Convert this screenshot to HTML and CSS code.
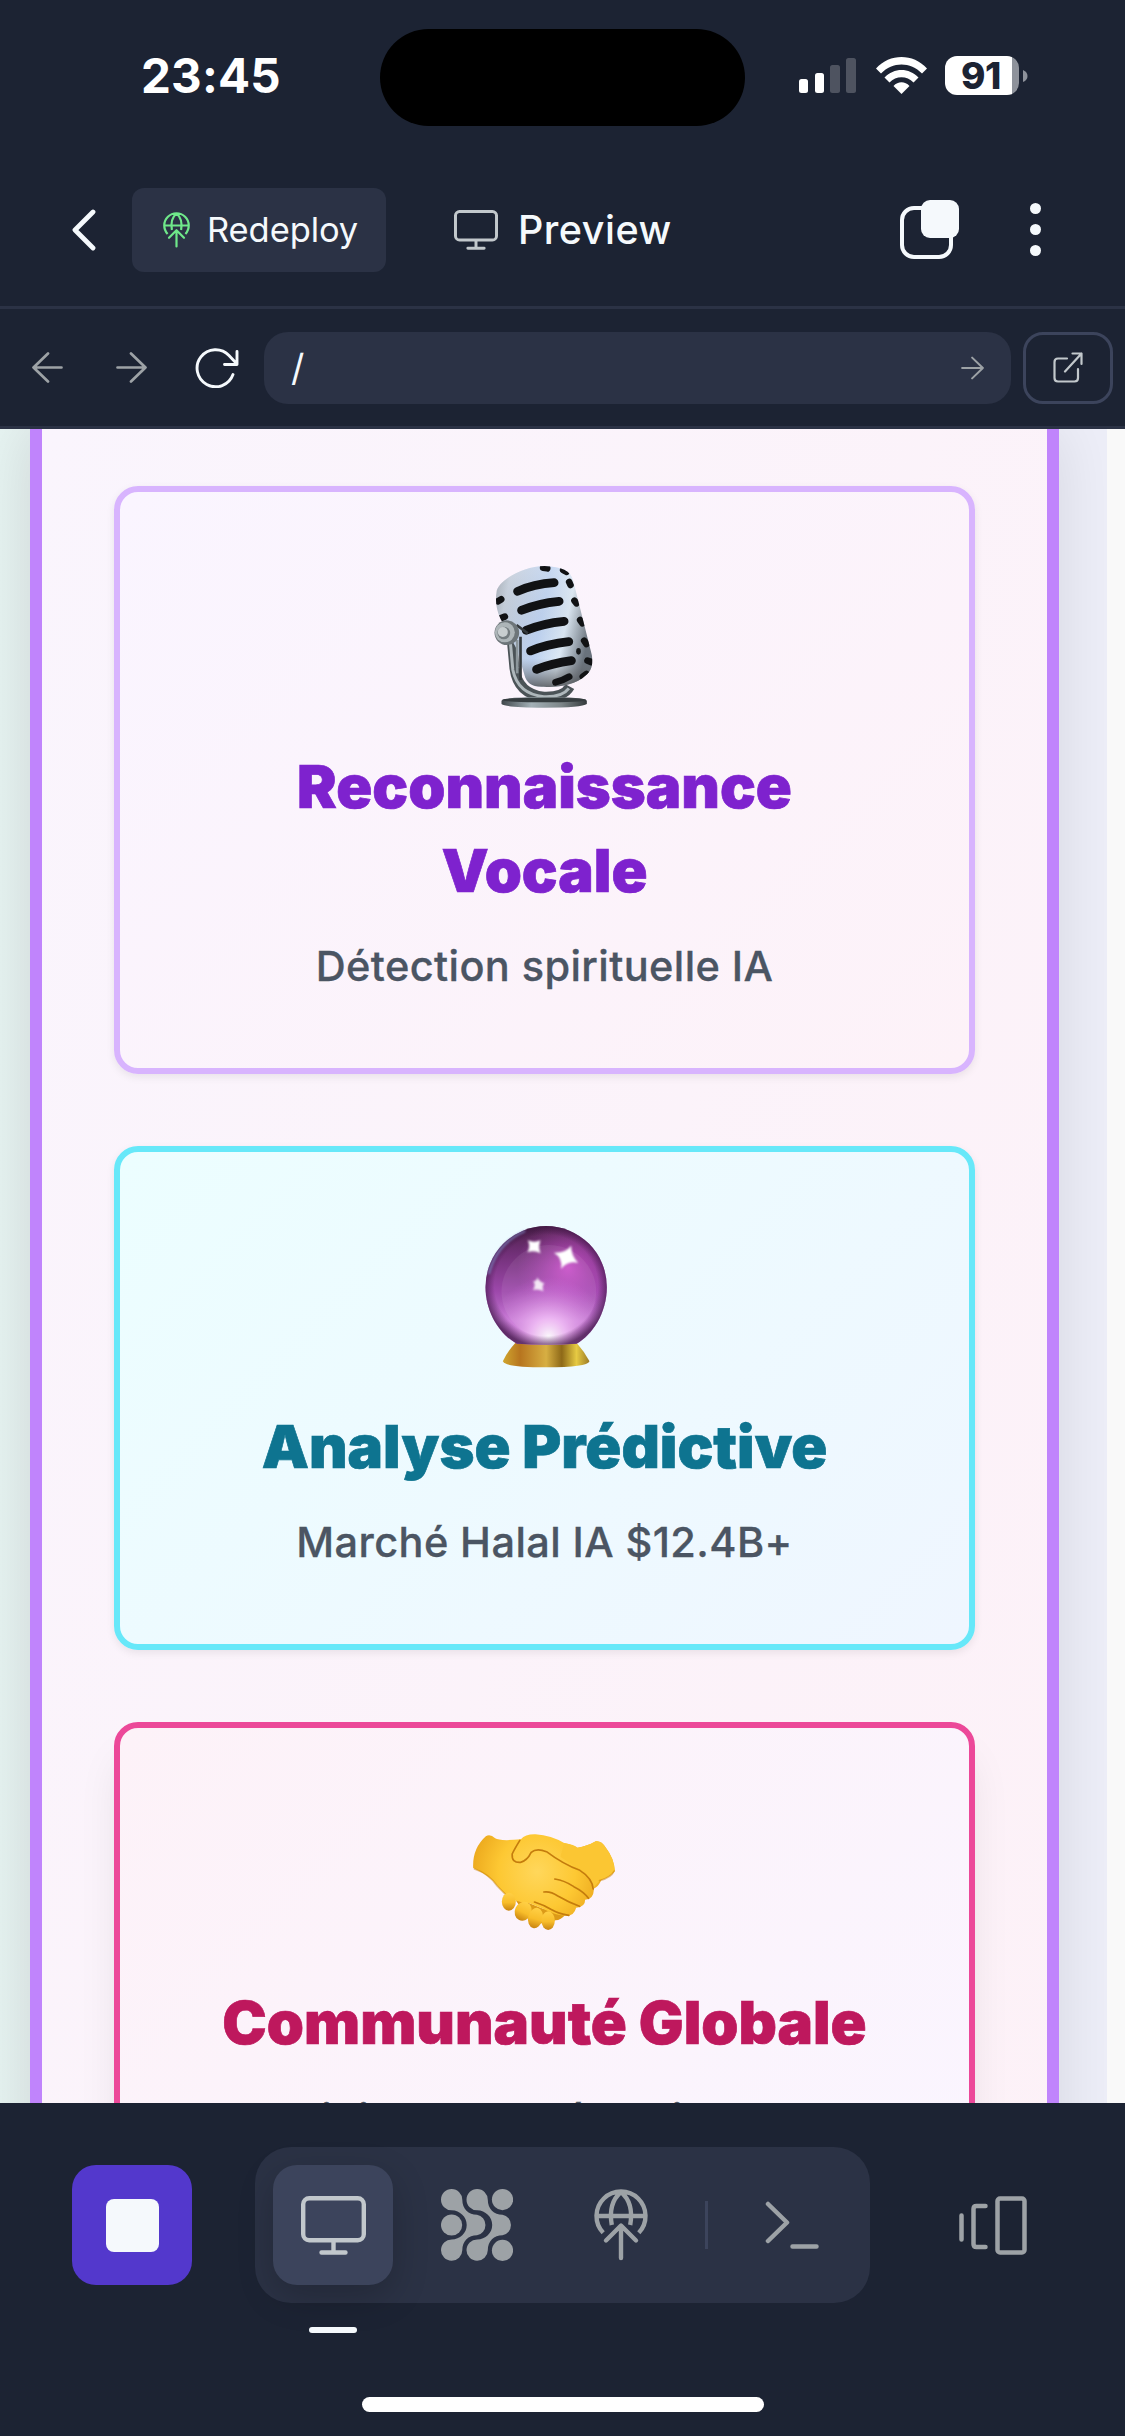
FILE: index.html
```
<!DOCTYPE html>
<html lang="fr">
<head>
<meta charset="utf-8">
<title>Preview</title>
<link rel="stylesheet" href="styles.css">
</head>
<body>
<svg class="defs" aria-hidden="true">
  <symbol id="monitor" viewBox="0 0 65 59"><g fill="none" stroke="currentColor" stroke-width="4.4" stroke-linecap="round"><rect x="2.2" y="2.2" width="60.6" height="42" rx="6"/><path d="M32.5 45v11M20.5 56.5h24"/></g></symbol>
  <symbol id="deploy" viewBox="0 0 54 72"><g fill="none" stroke="currentColor" stroke-width="4.4" stroke-linecap="round" stroke-linejoin="round"><path stroke-linecap="butt" d="M9.2 43.8A24.5 24.5 0 1 1 44.8 43.8M3 27h48M17.8 36C15.500 23 17.500 11 27 3C36.500 11 38.500 23 36.200 36"/><path d="M27 69V37M12 51.500L27 36.500L42 51.500"/></g></symbol>
  <symbol id="arrow" viewBox="0 0 31 31"><path fill="none" stroke="currentColor" stroke-width="2.700" stroke-linecap="round" stroke-linejoin="round" d="M1.500 15.500H29.500M15 1.500L29.500 15.500L15 29.500"/></symbol>
</svg>

<header class="status">
  <div class="time">23:45</div>
  <div class="island"></div>
  <div class="indicators">
    <svg width="57" height="36" viewBox="0 0 57 36"><g fill="#fff"><rect y="22" width="9" height="14" rx="2.500"/><rect x="16" y="16" width="9" height="20" rx="2.500"/><g opacity=".22"><rect x="31" y="8" width="10" height="28" rx="2.500"/><rect x="47" y="1" width="10" height="35" rx="2.500"/></g></g></svg>
    <svg class="wifi" width="51" height="37" viewBox="0 0 51 37"><path fill="#fff" d="M0 11.500C14-3.800 37-3.800 51 11.500L46 16.500C34.500 4.500 16.500 4.500 5 16.500ZM8.500 20.500C18 10.500 33 10.500 42.500 20.500L37.500 25.500C31 18.500 20 18.500 13.500 25.500ZM17.500 29C22 24 29 24 33.500 29L25.500 37Z"/></svg>
    <div class="battery"><span>91</span></div>
    <svg class="nub" width="5" height="12" viewBox="0 0 5 12"><path fill="#8e929b" d="M0 0Q4.500 2 4.500 6T0 12Z"/></svg>
  </div>
</header>

<nav class="titlebar">
  <svg class="back" width="24" height="42" viewBox="0 0 24 42"><path fill="none" stroke="#f5f9fc" stroke-width="4.800" stroke-linecap="round" stroke-linejoin="round" d="M21 3L3 21L21 39"/></svg>
  <div class="redeploy"><svg width="27" height="36"><use href="#deploy"/></svg><span>Redeploy</span></div>
  <div class="tab"><svg width="44" height="40"><use href="#monitor"/></svg><span>Preview</span></div>
  <svg class="tabs" width="59" height="59" viewBox="0 0 59 59"><rect x="2" y="8" width="49" height="49" rx="12" fill="none" stroke="#f5f9fc" stroke-width="4"/><rect x="21" width="38" height="38" rx="9" fill="#f5f9fc"/></svg>
  <svg class="dots" width="11" height="53" viewBox="0 0 11 53" fill="#f5f9fc"><circle cx="5.500" cy="5.500" r="5.500"/><circle cx="5.500" cy="26.500" r="5.500"/><circle cx="5.500" cy="47.500" r="5.500"/></svg>
</nav>

<div class="urlbar">
  <svg class="nav-prev" width="31" height="31"><use href="#arrow"/></svg>
  <svg class="nav-next" width="31" height="31"><use href="#arrow"/></svg>
  <svg class="reload" width="44" height="40" viewBox="0 0 44 40"><path fill="none" stroke="#f5f9fc" stroke-width="2.900" stroke-linecap="round" stroke-linejoin="round" d="M38 26.500A18.500 18.500 0 1 1 34 7.500L42 16M42 3.500V16.500H29.500"/></svg>
  <div class="address"><span>/</span><svg width="23" height="24"><use href="#arrow"/></svg></div>
  <div class="external"><svg width="30" height="31" viewBox="0 0 30 31"><path fill="none" stroke="#c2c8cc" stroke-width="2.200" stroke-linecap="round" stroke-linejoin="round" d="M14 6.500H5Q1.500 6.500 1.500 10V26Q1.500 29.500 5 29.500H21.500Q25 29.500 25 26V17M12 19.500L28.500 1.500M19.500 1.500H28.500V12"/></svg></div>
</div>

<main class="page">
  <section class="panel">
    <article class="card purple">
      <svg class="emoji" viewBox="97.500 72 432 432">
        <defs>
          <linearGradient id="steel" x1="0" y1="0" x2="1" y2=".25"><stop offset="0" stop-color="#8b929a"/><stop offset=".2" stop-color="#c3cddb"/><stop offset=".55" stop-color="#bdd2f1"/><stop offset=".78" stop-color="#dce9f5"/><stop offset="1" stop-color="#69727c"/></linearGradient>
          <linearGradient id="rim" x1="0" y1="0" x2="0" y2="1"><stop offset="0" stop-color="#fff" stop-opacity=".2"/><stop offset=".75" stop-color="#777" stop-opacity="0"/><stop offset="1" stop-color="#474a4d" stop-opacity=".9"/></linearGradient>
          <linearGradient id="base" x1="0" y1="0" x2="1" y2="0"><stop offset="0" stop-color="#3f474b"/><stop offset=".35" stop-color="#a3b0b6"/><stop offset=".7" stop-color="#7d8689"/><stop offset="1" stop-color="#343a3c"/></linearGradient>
          <clipPath id="micbody"><path d="M168 158C168 125 245 78 312 78C362 80 392 92 398 122L454 345C459 374 452 393 436 406C405 436 350 443 310 440C276 442 258 430 252 405L230 330L180 236C167 210 164 180 168 158Z"/></clipPath>
        </defs>
        <path d="M214 300L222 385Q232 462 310 470Q370 472 388 440" fill="none" stroke="#4b5357" stroke-width="30"/>
        <path d="M209 300L217 390Q232 462 310 470Q365 472 385 445" fill="none" stroke="#aeb7bb" stroke-width="9"/>
        <g clip-path="url(#micbody)">
          <rect x="150" y="70" width="320" height="380" fill="url(#steel)"/>
          <rect x="150" y="70" width="320" height="380" fill="url(#rim)"/>
          <g fill="none" stroke="#111214" stroke-width="26" stroke-linecap="round">
            <path d="M231 154Q280 132 341 128M243 211Q292 190 356 184M257 271Q307 250 371 244M270 333Q320 312 385 305M288 388Q335 370 393 362"/>
            <path stroke-width="20" d="M172 184L182 178M178 236L193 230M308 83L320 85M386 126L390 135M402 182L408 190M419 240L426 250M431 302L438 312M441 362L452 366M345 427Q368 421 386 410M427 410L438 402M368 90L378 95"/>
          </g>
          <ellipse cx="414" cy="334" rx="7" ry="10" fill="#151719"/>
        </g>
        <path d="M228 255L262 280M240 290V420" stroke="#34393c" stroke-width="8"/>
        <path d="M230 300V400" stroke="#8c969b" stroke-width="8"/>
        <circle cx="199" cy="278" r="37" fill="#6d7579"/><circle cx="193" cy="277" r="30" fill="#adb5b8"/><circle cx="190" cy="279" r="19" fill="#747c80"/><circle cx="187" cy="276" r="15" fill="#c8ced0"/>
        <path d="M183 482Q190 471 312 471T439 482V492Q425 503 311 503T183 492Z" fill="url(#base)"/><ellipse cx="311" cy="480" rx="126" ry="7" fill="#353c3f"/>
      </svg>
      <h2>Reconnaissance<br>Vocale</h2>
      <p>Détection spirituelle IA</p>
    </article>

    <article class="card cyan">
      <svg class="emoji" viewBox="97.500 72 432 432">
        <defs>
          <linearGradient id="orb" x1="0" y1="0" x2="0" y2="1"><stop offset="0" stop-color="#4c2148"/><stop offset=".22" stop-color="#6f2f75"/><stop offset=".55" stop-color="#9d48ab"/><stop offset=".8" stop-color="#bd75cc"/><stop offset="1" stop-color="#9545a2"/></linearGradient>
          <radialGradient id="glow" cx=".52" cy=".93" r=".5"><stop offset="0" stop-color="#fff" stop-opacity=".95"/><stop offset=".3" stop-color="#f4bdf9" stop-opacity=".85"/><stop offset="1" stop-color="#d567e2" stop-opacity="0"/></radialGradient>
          <radialGradient id="glint" cx=".68" cy=".35" r=".42"><stop offset="0" stop-color="#e75be3" stop-opacity=".7"/><stop offset="1" stop-color="#c752cf" stop-opacity="0"/></radialGradient>
          <radialGradient id="edge" cx=".5" cy=".5" r=".52"><stop offset=".82" stop-color="#37103e" stop-opacity="0"/><stop offset="1" stop-color="#37103e" stop-opacity=".7"/></radialGradient>
          <linearGradient id="gold" x1="0" y1="0" x2="1" y2="0"><stop offset="0" stop-color="#d0a62f"/><stop offset=".2" stop-color="#b7751f"/><stop offset=".5" stop-color="#d7af43"/><stop offset=".68" stop-color="#8e6918"/><stop offset=".85" stop-color="#e6ca43"/><stop offset="1" stop-color="#9c7b26"/></linearGradient>
          <filter id="soft" x="-.5" y="-.5" width="2" height="2"><feGaussianBlur stdDeviation="2.500"/></filter>
          <path id="ball" d="M317 78A182 183 0 0 1 499 261C499 340 455 405 408 431Q317 437 229 431C180 405 135 340 135 261A182 183 0 0 1 317 78Z"/>
        </defs>
        <path d="M225 428H408Q432 455 447 484Q440 502 317 502T187 484Q200 455 225 428Z" fill="url(#gold)"/>
        <use href="#ball" fill="url(#orb)"/>
        <use href="#ball" fill="url(#glint)"/>
        <use href="#ball" fill="url(#glow)"/>
        <ellipse cx="325" cy="275" rx="142" ry="140" fill="#fff" opacity=".07"/>
        <use href="#ball" fill="url(#edge)"/>
        <path d="M145 222Q168 130 254 93" fill="none" stroke="#8791cf" stroke-width="7" opacity=".65" filter="url(#soft)"/>
        <g fill="#fff" filter="url(#soft)"><path d="M262 121Q281 129 300 121Q292 140 300 160Q281 149 261 157Q271 139 262 121Z"/><path d="M340 158Q374 160 392 137Q391 164 413 189Q381 181 362 207Q367 173 340 158Z"/><path opacity=".85" d="M290 232Q296 246 312 250Q303 257 309 274Q294 266 277 270Q288 255 278 244Q290 244 290 232Z"/></g>
      </svg>
      <h2>Analyse Prédictive</h2>
      <p>Marché Halal IA $12.4B+</p>
    </article>

    <article class="card pink">
      <svg class="emoji" viewBox="97.500 0 432 432">
        <defs>
          <radialGradient id="skin" gradientUnits="userSpaceOnUse" cx="290" cy="215" r="210"><stop offset="0" stop-color="#ffd75b"/><stop offset=".55" stop-color="#fdc833"/><stop offset="1" stop-color="#eaa51b"/></radialGradient>
          <linearGradient id="finger" x1="0" y1="0" x2="0" y2="1"><stop offset="0" stop-color="#ffd046"/><stop offset=".55" stop-color="#f8bd2a"/><stop offset="1" stop-color="#c98411"/></linearGradient>
          <filter id="crease" x="-.2" y="-.2" width="1.400" height="1.400"><feGaussianBlur stdDeviation="2"/></filter>
        </defs>
        <path d="M345 150L411 143Q440 139 466 124Q482 121 496 143Q521 175 523 213Q515 228 482 241Q475 260 458 267L360 230Z" fill="#f2b326"/>
        <path d="M225 300L265 309L308 326L374 344Q362 360 345 361L320 372L270 365Z" fill="#dc9a18"/>
        <path d="M98 204Q95 146 136 109Q149 101 164 115Q178 124 241 118Q255 102 285 103Q333 107 371 129Q402 134 436 160Q445 185 430 217Q457 235 460 270Q459 298 434 299Q434 321 407 323Q400 350 373 347Q340 344 308 326L265 309Q229 310 196 284Q176 266 158 243Q137 222 98 204Z" fill="url(#skin)"/>
        <path d="M371 129Q402 134 411 143Q440 139 466 124Q482 121 496 143Q521 175 523 213Q500 232 480 240L456 266Q455 240 431 217Q390 190 360 170Z" fill="#fbc633"/>
        <g fill="none" stroke="#c47c0c" stroke-width="5" stroke-linecap="round" filter="url(#crease)"><path d="M238 121Q222 147 215 162Q213 189 240 187Q260 182 272 157Q288 143 318 155Q370 194 418 211Q456 235 458 267"/><path d="M343 237Q372 241 400 260Q430 275 444 295M310 276Q330 273 352 288Q385 307 417 319M282 306Q310 315 331 328Q355 342 385 346"/><path opacity=".45" d="M102 207Q145 221 170 258L195 283M477 242Q512 234 521 213" /></g>
        <g fill="url(#finger)"><ellipse cx="205" cy="305" rx="21" ry="27"/><ellipse cx="248" cy="334" rx="25" ry="29" transform="rotate(25 248 334)"/><ellipse cx="285" cy="354" rx="22" ry="31" transform="rotate(14 285 354)"/><ellipse cx="323" cy="362" rx="20" ry="28"/></g>
      </svg>
      <h2>Communauté Globale</h2>
      <p>Quotidien partagé en ligne halal</p>
    </article>
  </section>
  <div class="scroll"></div>
</main>

<footer class="dock">
  <div class="dock-row">
    <div class="stop"><i></i></div>
    <div class="pill">
      <div class="tool active"><svg width="65" height="59"><use href="#monitor"/></svg></div>
      <div class="tool"><svg width="72" height="72" viewBox="0 0 72 72" fill="currentColor"><path id="flow" d="M21.300 10.700C21.300 20 27.500 25.700 36 25.700A10.500 10.500 0 0 1 36 46.300C27.500 46.300 21.300 52 21.300 61.300A10.650 10.650 0 1 1 10.700 50.500C19 50.500 25.700 44 25.700 36S19 21.500 10.700 21.300A10.650 10.650 0 1 1 21.300 10.700Z"/><use href="#flow" x="25.500"/><circle cx="61.500" cy="10.600" r="10.600"/><circle cx="10.600" cy="36" r="10.600"/><circle cx="61.500" cy="61.400" r="10.600"/></svg></div>
      <div class="tool"><svg width="54" height="72"><use href="#deploy"/></svg></div>
      <div class="rule"></div>
      <div class="tool"><svg width="54" height="48" viewBox="0 0 54 48"><path fill="none" stroke="currentColor" stroke-width="4.500" stroke-linecap="round" stroke-linejoin="round" d="M3 3L22 21.500L3 40M27.500 45.500H51.500"/></svg></div>
    </div>
    <div class="tool"><svg width="68" height="59" viewBox="0 0 68 59"><g fill="none" stroke="currentColor" stroke-width="4.500" stroke-linecap="round" stroke-linejoin="round"><path d="M2.500 19.500V43.500M26.500 10H17.500Q14.500 10 14.500 13V48Q14.500 51 17.500 51H26.500"/><rect x="38.500" y="2.500" width="27" height="54" rx="2.500"/></g></svg></div>
  </div>
  <div class="current"></div>
  <div class="home"></div>
</footer>
</body>
</html>
```
FILE: styles.css
```
* { box-sizing: border-box; }
body { margin: 0; width: 1125px; height: 2436px; overflow: hidden; display: flex; flex-direction: column; background: #1c2333; color: #f5f9fc; font-family: Inter, "Liberation Sans", sans-serif; }
svg { display: block; flex: none; }
.defs { width: 0; height: 0; position: absolute; }

.status { height: 152px; flex: none; display: flex; align-items: flex-start; }
.time { width: 380px; padding-left: 141px; padding-top: 46px; font-size: 47.5px; line-height: 60px; font-weight: 700; color: #fff; letter-spacing: .2px; }
.island { width: 365px; height: 97px; margin-top: 29px; border-radius: 49px; background: #000; }
.indicators { display: flex; padding-top: 57px; margin-left: 54px; }
.wifi { margin-left: 20px; }
.battery { width: 74px; height: 39px; margin: -1px 0 0 18px; border-radius: 12px; background: linear-gradient(90deg, #fff 67px, #8e929b 67px); display: flex; align-items: center; justify-content: center; padding-right: 2px; color: #1c2333; font-size: 37px; line-height: 39px; font-weight: 800; letter-spacing: -.5px; }
.nub { margin: 13px 0 0 4px; }

.titlebar { height: 157px; flex: none; padding: 1px 84.5px 0 72px; border-bottom: 3px solid #2b3245; display: flex; align-items: center; }
.redeploy { width: 254px; height: 84px; margin-left: 36px; border-radius: 12px; background: #2b3245; display: flex; align-items: center; padding-left: 31px; gap: 17px; font-size: 34.5px; letter-spacing: -.1px; }
.redeploy svg { color: #6fe88a; }
.tab { display: flex; align-items: center; margin-left: 68px; gap: 20px; font-size: 39.5px; letter-spacing: .5px; font-weight: 500; }
.tab svg { color: #c2c8cc; }
.tabs { margin-left: auto; margin-top: -1px; }
.dots { margin-left: 71px; }

.urlbar { height: 120px; flex: none; padding: 0 12px 0 32px; border-bottom: 3px solid #2b3245; display: flex; align-items: center; color: #9da2a6; }
.nav-prev { transform: scaleX(-1); }
.nav-next { margin-left: 53px; }
.reload { margin-left: 48px; }
.address { width: 747px; height: 72px; margin-left: 25px; border-radius: 24px; background: #2b3245; display: flex; align-items: center; justify-content: space-between; padding: 0 27px; color: #9da2a6; }
.address span { font-size: 37px; color: #f5f9fc; }
.external { width: 90px; height: 72px; margin-left: 12px; border: 3px solid #3c445c; border-radius: 20px; display: grid; place-items: center; }

.page { height: 1674px; flex: none; overflow: hidden; display: flex; background: linear-gradient(90deg, #e6f3f1 0, #e5f0ef 30px, #edeef8 1059px, #edeef8 1107px); }
.panel { width: 1029px; height: 2100px; margin-left: 30px; flex: none; padding: 57px 72px; border: solid #c084fc; border-width: 0 12px; background: linear-gradient(110deg, #faf5fd, #fdf1f7); box-shadow: 0 0 60px rgba(0, 0, 0, .1); display: flex; flex-direction: column; gap: 72px; }
.scroll { width: 18px; height: 1674px; margin-left: 48px; background: #f9f9f9; position: relative; }
.card { flex: none; border: 6px solid; border-radius: 24px; padding: 72px 66px; text-align: center; box-shadow: 0 3px 9px rgba(0, 0, 0, .08); }
.emoji { width: 144px; height: 144px; margin: 0 auto 36px; }
.card h2 { margin: 0 0 24px; font-size: 59.5px; line-height: 84px; font-weight: 900; letter-spacing: 0; -webkit-text-stroke: .7px currentColor; white-space: nowrap; }
.card p { margin: 0; font-size: 41.5px; line-height: 60px; font-weight: 500; letter-spacing: .4px; -webkit-text-stroke: .3px currentColor; color: #4b5563; white-space: nowrap; }
.purple { border-color: #d8b4fe; background: linear-gradient(135deg, #faf5ff, #fdf2f8); }
.purple h2 { color: #7e22ce; }
.cyan { border-color: #67e8f9; background: linear-gradient(135deg, #ecfeff, #eff6ff); }
.cyan h2 { color: #0e7490; }
.pink { border-color: #ec4899; background: linear-gradient(135deg, #fdf2f8, #faf5ff); box-shadow: 0 30px 45px -9px rgba(0, 0, 0, .1), 0 12px 18px -12px rgba(0, 0, 0, .1); }
.pink h2 { color: #be185d; }
.pink p { padding-top: 1px; }

.dock { flex: 1; padding-top: 44px; background: #1c2333; position: relative; display: flex; flex-direction: column; }
.dock-row { display: flex; align-items: center; justify-content: space-between; padding: 0 72px; }
.stop { width: 120px; height: 120px; border-radius: 24px; background: #5338cc; display: grid; place-items: center; }
.stop i { width: 53px; height: 53px; border-radius: 8px; background: #f5f9fc; }
.pill { width: 615px; height: 156px; padding: 18px; border-radius: 36px; background: #2b3245; display: flex; align-items: center; gap: 24px; }
.tool { width: 120px; height: 120px; flex: none; border-radius: 24px; display: grid; place-items: center; color: #9da2a6; }
.active { background: #3c445c; color: #c2c8cc; box-shadow: 0 12px 36px rgba(2, 2, 3, .2); }
.rule { width: 3px; height: 48px; background: #3c445c; }
.current { width: 48px; height: 6px; margin: 24px 0 0 309px; border-radius: 3px; background: #f5f9fc; }
.home { width: 402px; height: 15px; margin: 64px auto 0; border-radius: 8px; background: #fff; }
```
